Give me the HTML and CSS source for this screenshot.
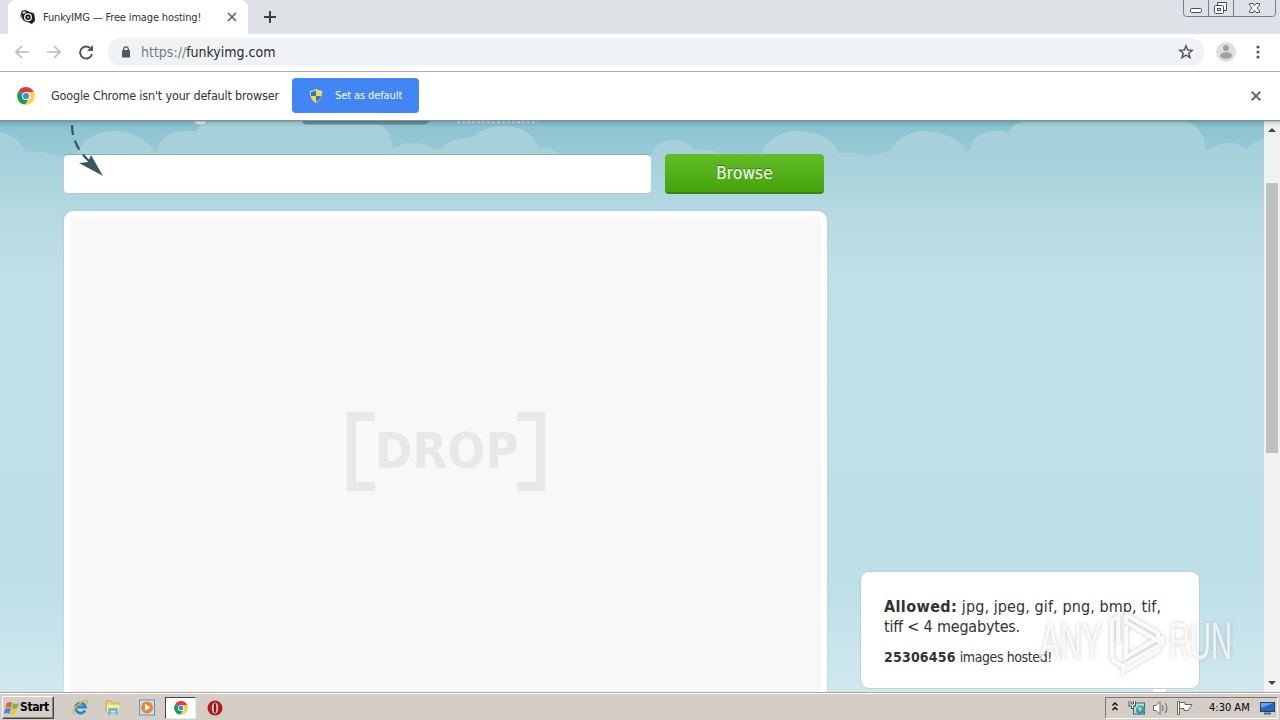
FILE: index.html
```html
<!DOCTYPE html>
<html lang="en">
<head>
<meta charset="utf-8">
<title>FunkyIMG — Free image hosting!</title>
<link rel="stylesheet" href="styles.css">
</head>
<body>
<svg class="defs" width="0" height="0">
  <symbol id="chrome" viewBox="0 0 18 18">
    <path fill="#e33b2e" d="M9 9 1.6 4.3A8.6 8.6 0 0 1 16.8 5.1L9 5.1Z"/>
    <path fill="#15a05a" d="M9 9 1.6 4.3A8.6 8.6 0 0 0 8.4 17.6L12.4 11Z"/>
    <path fill="#fdd14a" d="M9 5.1H16.8A8.6 8.6 0 0 1 8.4 17.6L12.4 11Z"/>
    <circle cx="9" cy="9" r="4" fill="#fff"/><circle cx="9" cy="9" r="3.1" fill="#4384f3"/>
  </symbol>
</svg>
<div class="screen">
  <header class="tabstrip">
    <div class="tab">
      <svg class="favicon" width="16" height="16" viewBox="0 0 16 16"><path d="M2 1 14 4 15 13 5 13 0 7Z" fill="#4b9146"/><path d="M1 3 5 1 14 5 15 11 12 15 3 11Z" fill="#17211a"/><circle cx="8" cy="8.2" r="4" fill="#eee"/><circle cx="8" cy="8.2" r="2.6" fill="#111"/><circle cx="8" cy="8.2" r="1" fill="#ddd"/><path d="M2 3 5 2 6 4 3 5Z" fill="#c5d5c5"/></svg>
      <span class="tab-title">FunkyIMG — Free image hosting!</span>
      <svg class="tab-close" width="10" height="10" viewBox="0 0 10 10"><path d="M1 1 9 9M9 1 1 9" stroke="#5f6368" stroke-width="1.7"/></svg>
    </div>
    <svg class="new-tab" width="12" height="12" viewBox="0 0 12 12"><path d="M6 0V12M0 6H12" stroke="#3c4043" stroke-width="2"/></svg>
    <svg class="window-buttons" width="94" height="18" viewBox="0 0 94 18" fill="none" stroke="#777c8a"><path d="M.5 0V13.5Q.5 16.500 3.500 16.500H89.500Q92.500 16.500 92.500 13.500V0M25.500 0V16M50.500 0V16"/><g stroke="#4b4f58"><rect x="7.500" y="8.500" width="11" height="4" rx="1" fill="#fff"/><path d="M34.500 5V2.500H43.500V10.500H41" fill="#fff"/><rect x="31.500" y="5.500" width="9" height="8" rx="1" fill="#fff"/><rect x="34.500" y="8.500" width="3" height="2"/><path d="M66.500 3.500H70L71.500 5.500 73 3.500H76.500V5L74 8 76.500 11V12.500H73L71.500 10.500 70 12.500H66.500V11L69 8 66.500 5Z" fill="#fff"/></g></svg>
  </header>
  <nav class="toolbar">
    <svg class="nav-icons" width="80" height="16" viewBox="0 0 80 16" fill="none"><path d="M15 8H2M8 2 2 8 8 14" stroke="#b8babd" stroke-width="1.700"/><path d="M33 8H46M40 2 46 8 40 14" stroke="#b8babd" stroke-width="1.700"/><path d="M77 5A6 6 0 1 0 78 10" stroke="#55595e" stroke-width="2"/><path d="M79 1V7H73Z" fill="#55595e"/></svg>
    <div class="omnibox">
      <svg width="10" height="12" viewBox="0 0 10 12"><rect x="1" y="4" width="8" height="7.500" rx="1" fill="#55595e"/><path d="M2.700 5V3.200A2.300 2.300 0 0 1 7.300 3.200V5" fill="none" stroke="#55595e" stroke-width="1.300"/></svg>
      <span class="url"><span class="scheme">https://</span>funkyimg.com</span>
      <svg class="star" width="16" height="16" viewBox="0 0 16 16"><path d="M8 1.800 9.700 6 14.300 6.300 10.800 9.200 12 13.700 8 11.200 4 13.700 5.200 9.200 1.700 6.300 6.300 6Z" fill="none" stroke="#55595e" stroke-width="1.500"/></svg>
    </div>
    <svg class="avatar" width="20" height="20" viewBox="0 0 20 20"><circle cx="10" cy="10" r="10" fill="#dedfe1"/><circle cx="10" cy="6" r="3" fill="#a0a1a3"/><ellipse cx="10" cy="13.500" rx="6" ry="3.200" fill="#a0a1a3"/></svg>
    <svg class="more" width="4" height="14" viewBox="0 0 4 14" fill="#55595e"><circle cx="2" cy="2" r="1.600"/><circle cx="2" cy="7" r="1.600"/><circle cx="2" cy="12" r="1.600"/></svg>
  </nav>
  <div class="infobar">
    <svg width="18" height="18"><use href="#chrome"/></svg>
    <span class="info-text">Google Chrome isn't your default browser</span>
    <div class="default-button">
      <svg width="14" height="16" viewBox="0 0 14 16"><path d="M7 .5Q9.500 2.500 13.300 2.500 14 11 7 15.500 0 11 .7 2.500 4.500 2.500 7 .5Z" fill="#dce7ee" stroke="#5c7080" stroke-width=".6"/><path d="M7 2Q5 3.500 2 3.700V8H7Z" fill="#2e78c5"/><path d="M7 2Q9 3.500 12 3.700V8H7Z" fill="#f9d83b"/><path d="M2 8Q3 12 7 14V8Z" fill="#f9d83b"/><path d="M12 8Q11 12 7 14V8Z" fill="#2e78c5"/></svg>
      <span>Set as default</span>
    </div>
    <svg class="info-close" width="10" height="10" viewBox="0 0 10 10"><path d="M.7.7 9.300 9.300M9.300.7.7 9.300" stroke="#65696e" stroke-width="2"/></svg>
  </div>
  <div class="viewport">
    <main class="page">
      <svg class="clouds" width="1264" height="40" viewBox="0 121 1264 40"><path fill="#a6d1db" d="M0 132Q19 136 26 153 44 150 60 157 72 157 80 148 91 131 115 131 143 133 155 152L157 152Q160 132 184 131L196 131Q201 122 213 121H370Q391 124 393 149 403 142 414 143 428 144 434 149L441 149Q452 137 474 137 483 126 505 126 531 127 539 148 551 147 560 154L652 155Q655 141 673 140 689 141 695 150 710 149 722 154L762 153Q771 132 797 131 831 132 838 153 858 151 868 157 876 153 890 152 899 132 925 131 954 132 967 152L970 149Q974 132 993 131 1003 130 1008 133 1013 123 1025 121H1185Q1205 127 1206 151 1219 142 1232 143 1240 144 1246 150 1253 141 1264 139V161H0Z"/></svg>
      <svg class="shade" width="1264" height="5" viewBox="0 0 1264 5"><path d="M302 0H429Q428 3.500 424 3.500H307Q303 3.500 302 0Z" fill="#6a8f98"/><path d="M194 0H207Q205 3.500 200 3.500 196 3.500 194 0Z" fill="#e6edf0"/><path d="M457 1H538" stroke="#fff" stroke-dasharray="3 2"/></svg>
      <section class="uploader">
        <div class="upload-row"><div class="file-field"></div><div class="browse">Browse</div></div>
        <div class="drop-zone"><div class="drop-mark"><i class="bracket open"></i><span>DROP</span><i class="bracket close"></i></div></div>
      </section>
      <aside class="facts"><p class="allowed"><b>Allowed:</b> <span>jpg, jpeg, gif, png, bmp, tif,</span><br><span class="second">tiff &lt; 4 megabytes.</span></p><p class="hosted"><b>25306456</b> <span>images hosted!</span></p></aside>
      <svg class="arrow" width="42" height="56" viewBox="0 0 42 56"><path d="M8 4Q8 25 27 42" fill="none" stroke="#315a65" stroke-width="2.300" stroke-dasharray="10 6"/><path d="M39 55 15 42 24 41 27 34Z" fill="#365861"/></svg>
      <div class="bubble-tip"></div>
    </main>
    <div class="scrollbar"><svg width="8" height="5" viewBox="0 0 8 5"><path d="M0 5 4 1 8 5Z" fill="#444"/></svg><div class="thumb"></div><svg class="down" width="8" height="5" viewBox="0 0 8 5"><path d="M0 0 4 4 8 0Z" fill="#444"/></svg></div>
  </div>
  <footer class="taskbar">
    <div class="start"><svg width="16" height="16" viewBox="0 0 16 16"><path d="M3 3Q6 1 8 3L7 8Q4 6 1 8Z" fill="#e66528"/><path d="M9 3Q12 5 15 3L13 8Q10 10 8 8Z" fill="#79b83b"/><path d="M1 9Q4 7 7 9L5 14Q3 12 0 14Z" fill="#4386cf"/><path d="M8 9Q10 11 13 9L11 14Q8 16 6 14Z" fill="#f1c333"/></svg><span>Start</span></div>
    <svg class="ie" width="17" height="17" viewBox="0 0 17 17"><path d="M13 11.500A5 5 0 1 1 13.500 8H5" fill="none" stroke="#2389ce" stroke-width="2.800"/><path d="M2 15Q-.5 12 6 6 14-.5 15.500 2 16 3 14 5" fill="none" stroke="#d9b545" stroke-width="1.500"/></svg>
    <svg class="folder" width="16" height="17" viewBox="0 0 16 17"><path d="M1 2H6L8 4H14V13H1Z" fill="#ecd170" stroke="#c5a652"/><path d="M2 6H15L14 13H2Z" fill="#faeaa3"/><path d="M3 16V10Q3 9 4 9H12Q13 9 13 10V16H10V12H6V16Z" fill="#72bce0"/></svg>
    <svg class="media" width="16" height="17" viewBox="0 0 16 17"><rect x=".5" y="1" width="15" height="15" fill="#c9e1f5" stroke="#5b93c7"/><circle cx="8" cy="8.500" r="6" fill="#ee8522"/><path d="M6 5V12L11.500 8.500Z" fill="#fff"/></svg>
    <div class="active-task"><svg width="14" height="14"><use href="#chrome"/></svg></div>
    <svg class="opera" width="16" height="16" viewBox="0 0 16 16"><circle cx="8" cy="8" r="7.500" fill="#b51c20"/><ellipse cx="8" cy="8" rx="3" ry="5.500" fill="#fff"/><ellipse cx="8" cy="8" rx="1.500" ry="5" fill="#8e1518"/></svg>
    <div class="tray">
      <svg width="84" height="18" viewBox="0 0 84 18"><path d="M2.500 6.500 5 4 7.500 6.500M2.500 11 5 8.500 7.500 11" fill="none" stroke="#111" stroke-width="1.500"/><g transform="translate(2.500 0)"><rect x="21" y="4" width="11" height="11" fill="#b8dadd" stroke="#45656b"/><circle cx="28" cy="11" r="4.500" fill="#2f9ba2"/><path d="M25 9Q28 6 30 10L27 13Z" fill="#90d8bd"/><path d="M17.500 2V6H22V2M20 6V10" fill="none" stroke="#45555c" stroke-width="3"/><path d="M17.500 2V6H22V2M20 6V9" fill="none" stroke="#fff"/></g><path d="M43.500 6.500H46L50 2.500V15.500L46 11.500H43.500Z" fill="#fff" stroke="#666"/><path d="M52 6Q54 9 52 12M55 4Q59 9 55 14" fill="none" stroke="#777" stroke-width="1.200"/><path d="M67.500 2.500H69.500V15.500H67.500Z" fill="#fff" stroke="#666"/><path d="M69.500 3.500H75V5.500H82L78 11.500H74V9.500H69.500Z" fill="#fff" stroke="#666"/></svg>
      <span class="time">4:30 AM</span>
      <svg class="desktop" width="15" height="14" viewBox="0 0 15 14"><rect x=".5" y="1.500" width="14" height="9" fill="#2866c2" stroke="#203f73"/><path d="M1 2H13L1 7Z" fill="#69a4e5"/><path d="M4 12.500H11" stroke="#567" stroke-width="2"/></svg>
    </div>
  </footer>
  <svg class="watermark" width="204" height="72" viewBox="0 0 204 72" fill="none"><g class="watermark-mark"><path d="M75 53V14L81 11V36"/><path d="M89 6V16L121 35V27L89 9"/><path d="M89 20V51L118 34"/><path d="M75 54 86 60 125 38V30"/><path d="M86 59V65L124 43"/></g><g class="watermark-text"><text x="3" y="53" textLength="62" lengthAdjust="spacingAndGlyphs">ANY</text><text x="132" y="53" textLength="63" lengthAdjust="spacingAndGlyphs">RUN</text></g></svg>
</div>
</body>
</html>
```
FILE: styles.css
```css
*{box-sizing:border-box}
body{margin:0;overflow:hidden;font-family:"DejaVu Sans Condensed","DejaVu Sans",sans-serif;font-stretch:condensed;color:#333}
svg{display:block;flex:none}
.defs{position:absolute}
.screen{position:relative;width:1280px;height:720px;display:flex;flex-direction:column;overflow:hidden;white-space:nowrap}
.tabstrip{height:34px;background:#dee1e6;display:flex;padding-left:8px;flex:none}
.tab{width:240px;height:34px;background:#fff;border-radius:8px 8px 0 0;display:flex;align-items:center;padding:0 11px 0 12px}
.tab-title{font-size:11px;letter-spacing:-.15px;margin-left:7px;color:#333}
.tab-close{margin-left:auto}
.new-tab{margin:11px 0 0 16px}
.window-buttons{margin-left:auto;margin-right:3px}
.toolbar{height:38px;display:flex;align-items:center;padding:0 20px 2px 14px;border-bottom:1px solid #aaadb2;flex:none}
.omnibox{height:28px;flex:1;margin-left:14px;background:#f0f3f5;border-radius:14px;display:flex;align-items:center;padding:0 10px 0 13px}
.url{font-size:14px;margin-left:10px;color:#282b2e}
.scheme{color:#777b80}
.star{margin-left:auto}
.avatar{margin-left:12px}
.more{margin-left:20px}
.infobar{height:49px;display:flex;align-items:center;padding:0 19px 2px 17px;flex:none}
.info-text{font-size:12.5px;letter-spacing:-.18px;margin-left:16px;width:228px}
.default-button{width:127px;height:35px;margin-left:13px;border-radius:4px;background:#4285f4;color:#fff;font-size:11px;letter-spacing:-.1px;display:flex;align-items:center;padding-left:17px;gap:12px}
.info-close{margin-left:auto}
.viewport{height:571px;display:flex;flex:none}
.page{position:relative;width:1264px;display:flex;align-items:flex-start;padding:33px 0 0 64px;overflow:hidden;background:linear-gradient(#8ac1d0 0,#99cad6 34px,#a6d1db 36px,#b5d9e2 90px,#c0e0e8 155px,#bddfe8 400px,#bddfe8 460px,#d1e8ee 571px)}
.viewport:after{content:"";position:absolute;left:0;top:120px;width:1280px;height:7px;background:linear-gradient(rgba(35,65,72,.7),rgba(35,65,72,.16) 2px,transparent)}
.clouds,.shade{position:absolute;left:0;top:0}
.uploader{position:relative;width:763px}
.upload-row{display:flex;gap:14px;height:40px}
.file-field{width:587px;height:38px;margin-top:1px;background:#fff;border-radius:4px;box-shadow:0 -1px #82aeb8,0 1px #b8c9cc}
.browse{width:159px;height:40px;border-radius:4px;background:linear-gradient(#62bd27,#46a30b);border-bottom:2px solid #37850d;color:#fff;text-align:center;font-size:17px;letter-spacing:.15px;line-height:39px;text-shadow:0 -1px #327b12}
.drop-zone{height:500px;margin-top:17px;background:#f8f8f8;border:6px solid #fff;border-radius:9px;box-shadow:0 0 2px #829da366}
.drop-mark{display:flex;width:198px;height:79px;margin:195px 0 0 277px;align-items:center}
.drop-mark span{width:142px;font-weight:bold;font-size:50px;color:#e8e8e8;line-height:77px;letter-spacing:.1px;text-align:center}
.bracket{width:28px;height:79px;border:9px solid #e8e8e8;flex:none}
.open{border-right:0}
.close{border-left:0}
.facts{position:relative;width:340px;height:118px;margin:417px 0 0 33px;padding:25px 23px 0;border-radius:9px;background:#fff;border:1px solid #b7d2da}
.facts p{margin:0}
.allowed{font-size:16px;line-height:20px}
.allowed b{letter-spacing:.4px}
.allowed span{letter-spacing:.1px}
.allowed .second{letter-spacing:-.2px}
.hosted{font-size:14px;line-height:20px;margin-top:10px!important}
.hosted span{letter-spacing:-.4px}
.hosted b{letter-spacing:.2px}
.bubble-tip{position:absolute;left:1153px;top:568px;width:13px;height:3px;background:#fff}
.arrow{position:absolute;left:64px;top:0}
.scrollbar{width:16px;background:#f1f1f1;display:flex;flex-direction:column;align-items:center;padding-top:6px}
.thumb{width:12px;height:270px;margin-top:51px;background:#c1c1c1}
.down{margin-top:228px}
.taskbar{height:28px;background:#d4cec7;border-top:1px solid #aaa69f;box-shadow:inset 0 1px #fff;display:flex;align-items:center;padding:3px 2px 1px;flex:none;color:#000}
.start{width:52px;height:23px;display:flex;align-items:center;border:1px solid;border-color:#fff #444 #444 #fff;box-shadow:inset -1px -1px #888;font-weight:bold;font-size:12px;letter-spacing:-.4px;padding-left:1px}
.start span{position:relative;top:-1px}
.ie{margin-left:18px}
.folder{margin-left:16px}
.media{margin-left:18px}
.active-task{width:31px;height:22px;margin-left:10px;border:1px solid;border-color:#444 #eee #eee #444;background:#fff;display:flex;align-items:center;justify-content:center}
.opera{margin-left:11px}
.tray{width:173px;height:22px;margin-left:auto;border:1px solid;border-color:#777 #fff #fff #777;display:flex;align-items:center;padding-left:4px}
.time{font-size:11px;margin-left:15px}
.desktop{margin-left:auto;margin-right:2px}
.watermark{position:absolute;left:1037px;top:606px;filter:drop-shadow(0 0 2px #8888)}
.watermark-mark{stroke:#fff;stroke-opacity:.85;stroke-width:4}
.watermark-text{font:52px "Liberation Sans",sans-serif;fill:#fff;fill-opacity:.75}
```
